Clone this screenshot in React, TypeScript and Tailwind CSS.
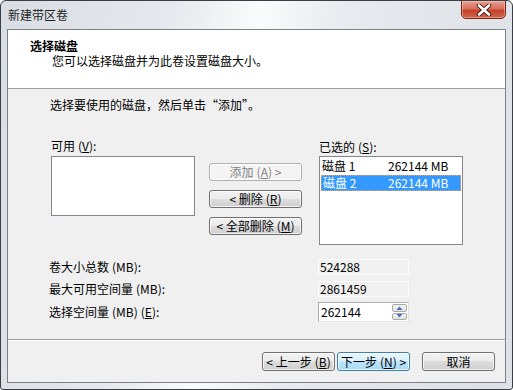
import React from 'react';

const U: React.FC<{ children: React.ReactNode }> = ({ children }) => <span className="underline underline-offset-1">{children}</span>;

// mnemonic in parentheses, e.g. (A) with the letter underlined
const Key: React.FC<{ k: string }> = ({ k }) => (
  <span className="ml-[3px]">
    (<U>{k}</U>)
  </span>
);

const WinButton: React.FC<{ children: React.ReactNode; variant?: 'normal' | 'focus' | 'disabled'; className?: string }> = ({
  children,
  variant = 'normal',
  className = '',
}) => {
  const variants = {
    normal: 'border-[#707070] bg-[linear-gradient(#f2f2f2_0%,#ebebeb_50%,#dddddd_50%,#cfcfcf_100%)] text-black',
    focus: 'border-[#3c7fb1] bg-[linear-gradient(#eaf6fd_0%,#d9f0fc_50%,#bee6fd_50%,#a7d9f5_100%)] text-black',
    disabled: 'border-[#adb2b5] bg-[#f4f4f4] text-[#838383]',
  };
  return (
    <div
      className={`h-[18px] rounded-[3px] border flex items-center justify-center text-[12px] leading-none whitespace-pre shadow-[inset_0_0_0_1px_rgba(255,255,255,0.75)] ${variants[variant]} ${className}`}
    >
      {children}
    </div>
  );
};

const ReadBox: React.FC<{ value: string }> = ({ value }) => (
  <div className="w-[91px] h-[16px] border border-[#fbfbfb] bg-[#f0f0f0] text-[12px] leading-[14px] pl-px">{value}</div>
);

export default function App() {
  return (
    <div className="w-[513px] h-[390px] bg-white font-['Noto_Sans_CJK_SC',sans-serif] text-black text-[12px]">
      {/* window frame */}
      <div className="w-full h-full flex flex-col border border-[#3b3f45] rounded-t-[6px] rounded-b-[3px] bg-[linear-gradient(100deg,#d9dee4_0%,#e6e9ed_30%,#fafbfc_45%,#e7eaee_60%,#dce1e7_100%)] overflow-hidden">
        {/* title bar */}
        <div className="h-[28px] flex items-start">
          <div className="pl-[7px] pt-[6px] leading-[16px] text-[12px] text-[#1e1e1e]">新建带区卷</div>
          <div className="ml-auto mr-[6px] w-[45px] h-[19px] -mt-px rounded-b-[5px] border border-[#7a2418] bg-[linear-gradient(#e8a093_0%,#d9705d_45%,#c5412a_55%,#d0634c_100%)] shadow-[inset_0_0_0_1px_rgba(255,220,210,0.45)] flex items-center justify-center">
            <svg width="16" height="12" viewBox="0 0 16 12">
              <path d="M3 1.5 L13 10.5 M13 1.5 L3 10.5" stroke="#4a1a12" strokeWidth="4.4" strokeLinecap="round" />
              <path d="M3 1.5 L13 10.5 M13 1.5 L3 10.5" stroke="#ffffff" strokeWidth="2.6" strokeLinecap="round" />
            </svg>
          </div>
        </div>

        {/* client area */}
        <div className="mx-[6px] h-[354px] border border-[#7d8187] bg-[#f0f0f0] flex flex-col">
          {/* header */}
          <div className="h-[59px] bg-white border-b border-[#a0a0a0] pl-[22px] pt-[9px]">
            <div className="font-bold leading-[14px]">选择磁盘</div>
            <div className="pl-[22px] leading-[14px] mt-px">您可以选择磁盘并为此卷设置磁盘大小。</div>
          </div>

          {/* body */}
          <div className="h-[250px] flex flex-col">
            <div className="pl-[42px] pt-[8px] leading-[16px]">选择要使用的磁盘，然后单击“添加”。</div>

            <div className="flex pl-[43px] mt-[25px]">
              <div className="w-[144px] flex flex-col">
                <div className="h-[16px] leading-[16px] mb-[2px]">
                  可用<Key k="V" />:
                </div>
                <div className="h-[60px] bg-white border border-[#828790]" />
              </div>

              <div className="ml-[14px] w-[93px] pt-[25px] flex flex-col gap-[9px]">
                <WinButton variant="disabled">
                  添加<Key k="A" /> &gt;
                </WinButton>
                <WinButton>
                  &lt; 删除<Key k="R" />
                </WinButton>
                <WinButton>
                  &lt; 全部删除<Key k="M" />
                </WinButton>
              </div>

              <div className="ml-[17px] w-[144px] flex flex-col">
                <div className="h-[16px] leading-[16px] mb-[2px] pt-px">
                  已选的<Key k="S" />:
                </div>
                <div className="h-[89px] bg-white border border-[#828790] p-px flex flex-col">
                  <div className="h-[16px] flex items-center leading-none pl-px">
                    <span className="w-[66px]">磁盘 1</span>
                    <span>262144 MB</span>
                  </div>
                  <div className="h-[16px] mt-px flex items-center leading-none pl-px bg-[#3399ff] text-white border border-dotted border-[#f5a04a]">
                    <span className="w-[65px]">磁盘 2</span>
                    <span>262144 MB</span>
                  </div>
                </div>
              </div>
            </div>

            <div className="flex flex-col mt-[14px] pl-[41px]">
              <div className="flex items-center">
                <div className="w-[269px] leading-[14px]">
                  卷大小总数<span className="ml-[3px]">(MB)</span>:
                </div>
                <ReadBox value="524288" />
              </div>
              <div className="flex items-center mt-[6px]">
                <div className="w-[269px] leading-[14px]">
                  最大可用空间量<span className="ml-[3px]">(MB)</span>:
                </div>
                <ReadBox value="2861459" />
              </div>
              <div className="flex items-center mt-[5px]">
                <div className="w-[269px] leading-[14px]">
                  选择空间量<span className="ml-[3px]">(MB)</span>
                  <Key k="E" />:
                </div>
                <div className="w-[91px] h-[20px] bg-white border border-[#abadb3] border-b-[#e3e9ef] border-r-[#dbdfe6] flex items-center">
                  <span className="pl-[2px] flex-1 leading-none">262144</span>
                  <div className="w-[16px] h-full flex flex-col gap-px py-px pr-px">
                    <div className="flex-1 border border-[#a9a9a9] rounded-[2px] bg-[linear-gradient(#f6f6f6,#e2e2e2)] flex items-center justify-center">
                      <svg width="7" height="4" viewBox="0 0 7 4">
                        <path d="M0.5 4 L3.5 0.5 L6.5 4 Z" fill="#4d6fb8" />
                      </svg>
                    </div>
                    <div className="flex-1 border border-[#a9a9a9] rounded-[2px] bg-[linear-gradient(#f6f6f6,#e2e2e2)] flex items-center justify-center">
                      <svg width="7" height="4" viewBox="0 0 7 4">
                        <path d="M0.5 0 L6.5 0 L3.5 3.5 Z" fill="#4d6fb8" />
                      </svg>
                    </div>
                  </div>
                </div>
              </div>
            </div>
          </div>

          {/* footer */}
          <div className="flex-1 border-t border-[#a0a0a0] shadow-[inset_0_1px_0_#ffffff] flex items-start pt-[12px] pr-[10px]">
            <div className="ml-auto flex">
              <WinButton className="w-[73px] h-[19px]">
                &lt; 上一步<Key k="B" />
              </WinButton>
              <WinButton variant="focus" className="w-[73px] h-[19px] ml-[2px]">
                下一步<Key k="N" /> &gt;
              </WinButton>
              <WinButton className="w-[73px] h-[19px] ml-[12px]">取消</WinButton>
            </div>
          </div>
        </div>
      </div>
    </div>
  );
}
